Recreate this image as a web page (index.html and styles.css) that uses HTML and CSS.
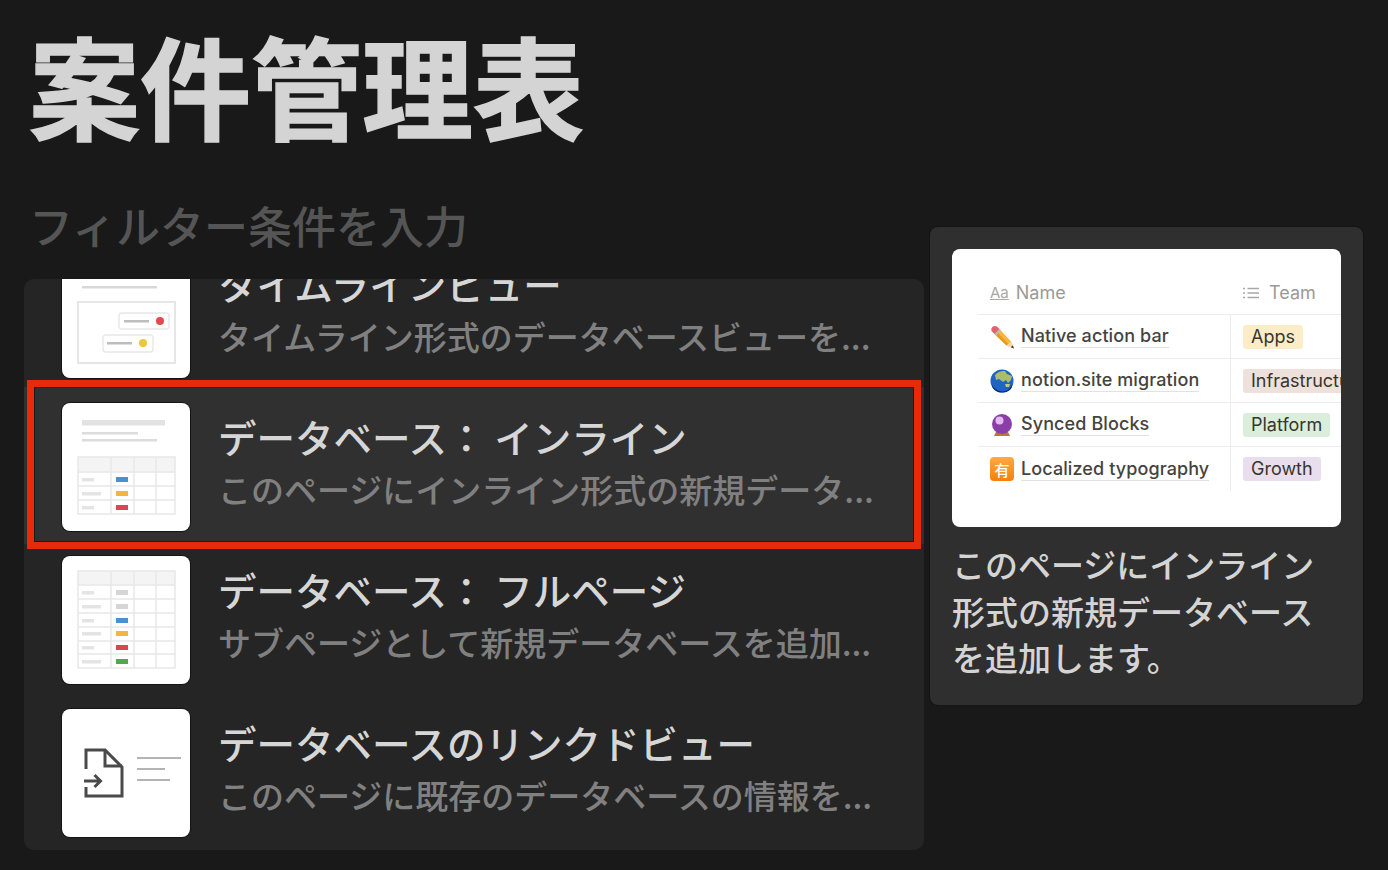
FILE: index.html
```html
<!DOCTYPE html>
<html lang="ja">
<head>
<meta charset="utf-8">
<title>案件管理表</title>
<link rel="stylesheet" href="styles.css">
</head>
<body>
<main class="page">
  <h1 class="title">案件管理表</h1>
  <p class="filter">フィルター条件を入力</p>
  <section class="menu">
    <ul class="list">
      <li class="item">
        <div class="thumb">
          <svg viewBox="0 0 128 128" width="128" height="128">
            <rect x="20" y="36" width="75" height="2.5" fill="#d8d8d8"/>
            <rect x="16" y="52" width="97" height="61" fill="none" stroke="#e6e6e6" stroke-width="2"/>
            <rect x="57" y="63" width="50" height="16" rx="3" fill="#fff" stroke="#e8e8e8" stroke-width="1.5"/>
            <rect x="62" y="70" width="25" height="2.5" fill="#bdbdbd"/>
            <circle cx="98" cy="71" r="4" fill="#e5484d"/>
            <rect x="41" y="85" width="50" height="17" rx="3" fill="#fff" stroke="#e8e8e8" stroke-width="1.5"/>
            <rect x="45" y="92" width="25" height="2.5" fill="#bdbdbd"/>
            <circle cx="81" cy="93" r="4" fill="#eec63a"/>
          </svg>
        </div>
        <div class="text">
          <div class="name">タイムラインビュー</div>
          <div class="desc">タイムライン形式のデータベースビューを...</div>
        </div>
      </li>
      <li class="item item-active">
        <div class="thumb">
          <svg viewBox="0 0 128 128" width="128" height="128">
            <rect x="20" y="17" width="83" height="5.5" fill="#e2e2e2"/>
            <rect x="20" y="29" width="56" height="2.5" fill="#dcdcdc"/>
            <rect x="20" y="36" width="75" height="2.5" fill="#dcdcdc"/>
            <rect x="16" y="54" width="97" height="15" fill="#f4f4f4"/>
            <g fill="none" stroke="#e8e8e8" stroke-width="1.5">
              <rect x="16" y="54" width="97" height="57"/>
              <path d="M16 69H113M16 83H113M16 97H113M49 54V111M72 54V111M94 54V111"/>
            </g>
            <g fill="#e4e4e4">
              <rect x="20" y="75" width="12" height="3.5"/>
              <rect x="20" y="89" width="19" height="3.5"/>
              <rect x="20" y="103" width="12" height="3.5"/>
            </g>
            <rect x="54" y="74" width="12" height="5" fill="#4a90d2"/>
            <rect x="54" y="88" width="12" height="5" fill="#f2b63c"/>
            <rect x="54" y="102" width="12" height="5" fill="#d9484f"/>
          </svg>
        </div>
        <div class="text">
          <div class="name">データベース： インライン</div>
          <div class="desc">このページにインライン形式の新規データ...</div>
        </div>
      </li>
      <li class="item">
        <div class="thumb">
          <svg viewBox="0 0 128 128" width="128" height="128">
            <rect x="16" y="15" width="97" height="14" fill="#f4f4f4"/>
            <g fill="none" stroke="#e8e8e8" stroke-width="1.5">
              <rect x="16" y="15" width="97" height="97"/>
              <path d="M16 29H113M16 43H113M16 57H113M16 71H113M16 85H113M16 98H113M49 15V112M72 15V112M94 15V112"/>
            </g>
            <g fill="#e4e4e4">
              <rect x="20" y="35" width="12" height="3.5"/>
              <rect x="20" y="49" width="19" height="3.5"/>
              <rect x="20" y="63" width="12" height="3.5"/>
              <rect x="20" y="76" width="19" height="3.5"/>
              <rect x="20" y="90" width="12" height="3.5"/>
              <rect x="20" y="104" width="19" height="3.5"/>
            </g>
            <rect x="54" y="34" width="12" height="5" fill="#d6d6d6"/>
            <rect x="54" y="48" width="12" height="5" fill="#d6d6d6"/>
            <rect x="54" y="62" width="12" height="5" fill="#4a90d2"/>
            <rect x="54" y="75" width="12" height="5" fill="#f2b63c"/>
            <rect x="54" y="89" width="12" height="5" fill="#d9484f"/>
            <rect x="54" y="103" width="12" height="5" fill="#55a84a"/>
          </svg>
        </div>
        <div class="text">
          <div class="name">データベース： フルページ</div>
          <div class="desc">サブページとして新規データベースを追加...</div>
        </div>
      </li>
      <li class="item">
        <div class="thumb">
          <svg viewBox="0 0 128 128" width="128" height="128">
            <g fill="none" stroke="#4a4a4a" stroke-width="3">
              <path d="M24 60V41H43L60 58V87H24V78"/>
              <path d="M43 41V57H60"/>
              <path d="M22 72H38M32.500 66L38.500 72L32.500 78"/>
            </g>
            <g fill="#b4b4b4">
              <rect x="75" y="48" width="44" height="2"/>
              <rect x="75" y="59" width="28" height="2"/>
              <rect x="75" y="70" width="33" height="2"/>
            </g>
          </svg>
        </div>
        <div class="text">
          <div class="name">データベースのリンクドビュー</div>
          <div class="desc">このページに既存のデータベースの情報を...</div>
        </div>
      </li>
    </ul>
  </section>

  <aside class="tip">
    <div class="preview">
      <div class="table">
        <div class="cell head first"><span class="aa">Aa</span>Name</div>
        <div class="cell head"><svg class="list-icon" viewBox="0 0 16 12" width="16" height="12"><path d="M0 1.500H2M4.500 1.500H16M0 6H2M4.500 6H16M0 10.500H2M4.500 10.500H16" stroke="#a8a8a8" stroke-width="1.600" fill="none"/></svg>Team</div>

        <div class="cell first main">
          <svg class="emoji" viewBox="0 0 24 24" width="24" height="24"><path d="M4.500 9L9.500 4L21 16.500L24 23.500L16.500 20.500Z" fill="#f6b73c"/><path d="M7 6.500L18.700 19.200L16.500 20.500L4.500 9Z" fill="#e99a22"/><path d="M4.500 9L9.500 4L11 5.600L6 10.600Z" fill="#b9bcc0"/><path d="M1.500 6Q0.500 3.500 2.500 1.800Q5 0 7.500 2L9.500 4L4.500 9Z" fill="#e8606a"/><path d="M21 16.500L24 23.500L16.500 20.500Z" fill="#f4d6a8"/><path d="M22.700 20.500L24 23.500L20.800 22.200Z" fill="#333"/></svg>
          <span class="label">Native action bar</span>
        </div>
        <div class="cell"><span class="tag tag-apps">Apps</span></div>

        <div class="cell first main">
          <svg class="emoji" viewBox="0 0 24 24" width="24" height="24"><circle cx="12" cy="12" r="11.500" fill="#1f63c4"/><path d="M5 6Q9 1.500 15 2L17 5L22 7L21 11L18 14L16 11L13 13L9 10L6 11Z" fill="#a9bd6a"/><path d="M15 15L20 15L19 18L16 18Z" fill="#c2c87a"/><path d="M1.500 15Q5 22 12 22.500Q19 22.500 22.500 15Q22 23.500 12 23.500Q3 23.500 1.500 15Z" fill="#0b2f6e"/></svg>
          <span class="label">notion.site migration</span>
        </div>
        <div class="cell"><span class="tag tag-infra">Infrastructure</span></div>

        <div class="cell first main">
          <svg class="emoji" viewBox="0 0 24 24" width="24" height="24"><path d="M6 19H18L20 23H4Z" fill="#b8743a"/><circle cx="12" cy="11" r="10" fill="#8a3fa8"/><circle cx="9.500" cy="7.500" r="4" fill="#e3b8ee"/></svg>
          <span class="label">Synced Blocks</span>
        </div>
        <div class="cell"><span class="tag tag-platform">Platform</span></div>

        <div class="cell first main last">
          <span class="emoji-box">有</span>
          <span class="label">Localized typography</span>
        </div>
        <div class="cell last"><span class="tag tag-growth">Growth</span></div>
      </div>
    </div>
    <p class="tip-text">このページにインライン形式の新規データベースを追加します。</p>
  </aside>
</main>
</body>
</html>
```

FILE: styles.css
```css
* {
  box-sizing: border-box;
}

html,
body {
  margin: 0;
  height: 870px;
  overflow: hidden;
  background: #191919;
}

body {
  font-family: "Noto Sans CJK JP", "Noto Sans", sans-serif;
}

.page {
  position: relative;
  height: 870px;
  padding: 18px 0 0 29px;
}

.title {
  margin: 0;
  font-size: 111px;
  line-height: 132px;
  font-weight: 700;
  color: #d4d4d4;
  -webkit-text-stroke: 1.500px #d4d4d4;
}

.filter {
  margin: 49px 0 0;
  font-size: 44px;
  line-height: 52px;
  font-weight: 500;
  color: #555;
}

.menu {
  width: 900px;
  height: 571px;
  margin: 28px 0 0 -5px;
  background: #252525;
  border-radius: 10px;
  overflow: hidden;
}

.list {
  list-style: none;
  margin: -41.500px 0 0;
  padding: 0;
}

.item {
  position: relative;
  display: flex;
  align-items: center;
  gap: 28px;
  height: 153px;
  padding: 0 0 0 38px;
}

.item-active {
  background: #303030;
  box-shadow: 0 -4px 0 #303030;
}

.item-active::after {
  content: "";
  position: absolute;
  left: 3px;
  right: 3px;
  top: -10.500px;
  bottom: -5.500px;
  border: 7px solid #e62a0a;
  box-shadow: inset 0 0 0 1px #1c1c1c;
  pointer-events: none;
}

.thumb {
  flex: none;
  width: 128px;
  height: 128px;
  background: #fff;
  border-radius: 8px;
  box-shadow: 0 0 0 1px #141414;
  overflow: hidden;
}

.thumb svg {
  display: block;
}

.text {
  display: flex;
  flex-direction: column;
  gap: 5px;
  min-width: 0;
  margin-top: -11px;
}

.name {
  font-size: 38.500px;
  line-height: 50px;
  font-weight: 500;
  color: #d6d6d6;
  white-space: nowrap;
}

.desc {
  font-size: 33px;
  line-height: 46px;
  font-weight: 500;
  color: #808080;
  white-space: nowrap;
}

.tip {
  position: absolute;
  left: 930px;
  top: 227px;
  width: 433px;
  height: 478px;
  padding: 22px;
  background: #2f2f2f;
  border-radius: 8px;
  box-shadow: 0 0 0 1px #141414;
}

.preview {
  width: 389px;
  height: 278px;
  padding: 22px 0 0 26px;
  background: #fff;
  border-radius: 8px;
  overflow: hidden;
}

.table {
  display: grid;
  grid-template-columns: 253px 1fr;
  grid-auto-rows: 44px;
  font-family: Inter, "Noto Sans", sans-serif;
  font-size: 18px;
  color: #37352f;
}

.cell {
  display: flex;
  align-items: center;
  padding-left: 12px;
  border-bottom: 1px solid #ededed;
  white-space: nowrap;
  min-width: 0;
}

.cell.first {
  padding-left: 12px;
}

.cell.last {
  border-bottom: 0;
}

.cell.main {
  border-right: 1px solid #ededed;
  gap: 7px;
}

.head {
  color: #9a9a97;
}

.aa {
  margin-right: 7px;
  font-size: 15px;
  color: #a8a8a8;
  text-decoration: underline;
}

.list-icon {
  margin: 0 10px 0 0;
}

.emoji {
  flex: none;
}

.emoji-box {
  flex: none;
  display: flex;
  align-items: center;
  justify-content: center;
  width: 24px;
  height: 24px;
  border-radius: 4px;
  background: linear-gradient(#ffab3d, #f47f0e);
  color: #fff;
  font-family: "Noto Sans CJK JP", sans-serif;
  font-size: 15px;
  font-weight: 500;
}

.label {
  font-weight: 500;
  letter-spacing: 0.1px;
  border-bottom: 1px solid #e2e2e0;
  line-height: 22px;
  color: #45433e;
}

.tag {
  padding: 0 8px;
  height: 24px;
  line-height: 24px;
  border-radius: 3px;
}

.tag-apps {
  background: #fdecc8;
}

.tag-infra {
  background: #eee0da;
}

.tag-platform {
  background: #dbeddb;
}

.tag-growth {
  background: #e8deee;
}

.tip-text {
  margin: 14px 0 0;
  font-size: 33px;
  line-height: 46.500px;
  font-weight: 500;
  color: #d4d4d4;
}
```
